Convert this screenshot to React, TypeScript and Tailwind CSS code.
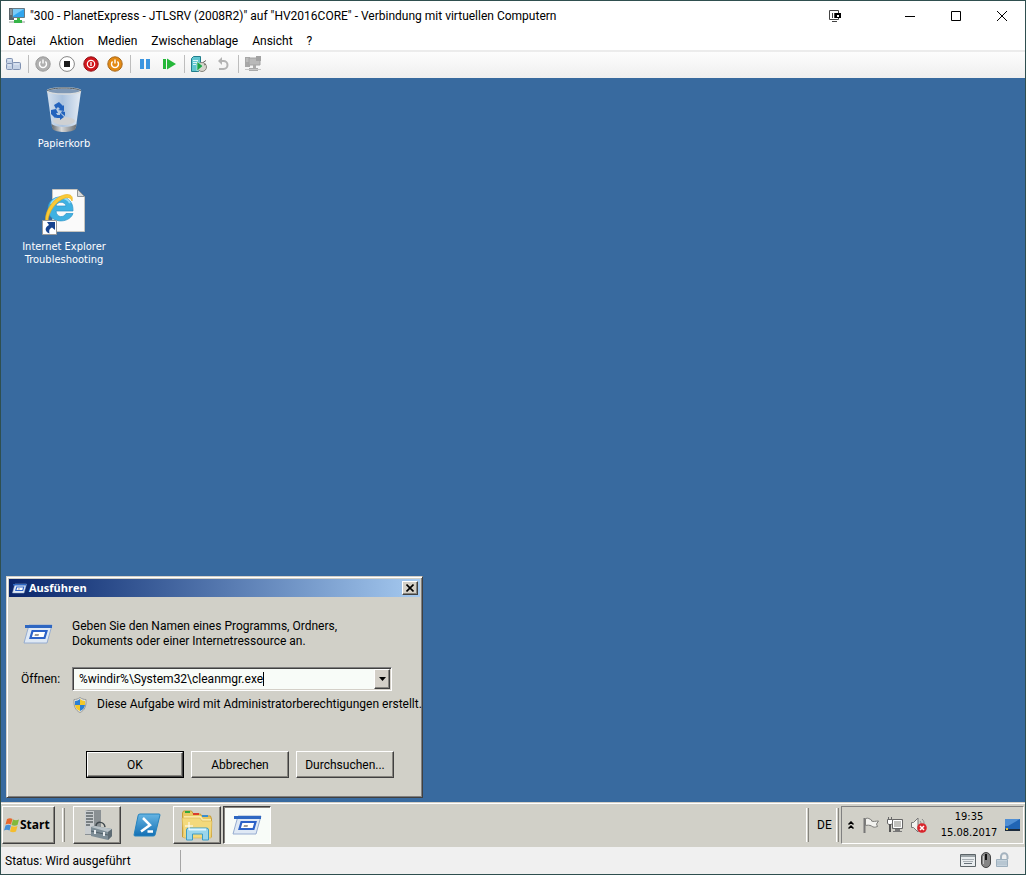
import { useState } from 'react';
import type { ReactNode } from 'react';

const raised =
  'border border-t-white border-l-white border-r-[#404040] border-b-[#404040] shadow-[inset_-1px_-1px_0_#87857f]';

const menus = ['Datei', 'Aktion', 'Medien', 'Zwischenablage', 'Ansicht', '?'];

function ComputerIcon() {
  return (
    <svg viewBox="0 0 16 16" className="size-4" aria-hidden="true">
      <path d="M0 0h5v12H0z" fill="#5b656b" />
      <path d="M1 2h3M1 4h3M1 6h3" stroke="#b8c4c9" />
      <path d="M3.5.5h12v9h-12z" fill="#31a5ee" stroke="#687983" />
      <path d="M4 1h11L4 8z" fill="#7accf8" />
      <path d="M8 10h3v3H8z" fill="#41bb4b" />
      <path d="M0 13h16v2H0z" fill="#c8ccca" />
      <path d="M5 12h8v3H5z" fill="#36b548" />
    </svg>
  );
}

function BlocksIcon() {
  return (
    <svg viewBox="0 0 16 16" className="size-4" aria-hidden="true">
      <g fill="#c6d3e6" stroke="#7f91b2">
        <rect x="1.5" y="2.5" width="6" height="5" rx="1" />
        <rect x="1.5" y="7.5" width="6" height="6" rx="1" />
        <rect x="7.5" y="6.5" width="8" height="7" rx="1" />
      </g>
      <path d="M3 4h3M3 9h3M9 8h5" stroke="#e9eff8" />
    </svg>
  );
}

function PowerIcon({ fill, ring }: { fill: string; ring: string }) {
  return (
    <svg viewBox="0 0 16 16" className="size-4" aria-hidden="true">
      <circle cx="8" cy="8" r="7.2" fill={fill} stroke={ring} />
      <path d="M5.6 5.5a3.5 3.5 0 1 0 4.8 0M8 3.5v4" fill="none" stroke="#fff" strokeWidth="1.4" />
    </svg>
  );
}

function StopIcon() {
  return (
    <svg viewBox="0 0 16 16" className="size-4" aria-hidden="true">
      <circle cx="8" cy="8" r="7.4" fill="#fff" stroke="#858585" />
      <path d="M5 5h6v6H5z" fill="#1c1c1c" />
    </svg>
  );
}

function ShutdownIcon() {
  return (
    <svg viewBox="0 0 16 16" className="size-4" aria-hidden="true">
      <circle cx="8" cy="8" r="7.2" fill="#d3151b" stroke="#8e1419" />
      <circle cx="8" cy="8" r="3.7" fill="none" stroke="#fff" strokeWidth="1.2" />
      <path d="M8 6v4" stroke="#fff" strokeWidth="1.3" />
    </svg>
  );
}

function PauseIcon() {
  return (
    <svg viewBox="0 0 16 16" className="size-4" aria-hidden="true">
      <path d="M3 3h4v10H3zM9 3h4v10H9z" fill="#3b95e0" />
    </svg>
  );
}

function ResumeIcon() {
  return (
    <svg viewBox="0 0 16 16" className="size-4" aria-hidden="true">
      <path d="M2 3h3v10H2zM6 2.5L15 8l-9 5.5z" fill="#25b83a" />
    </svg>
  );
}

function CheckpointIcon() {
  return (
    <svg viewBox="0 0 16 16" className="size-4" aria-hidden="true">
      <path d="M.5 2.5l2-2h7v13l-2 2h-7z" fill="#5fc5d0" stroke="#217e8c" />
      <path d="M2 4.5h5M2 6.5h5M2 8.500h3" stroke="#d9f5f8" />
      <circle cx="11" cy="11" r="4.5" fill="#d6d4cc" stroke="#85837c" />
      <path d="M6 5.5l6 4.500-6 5z" fill="#1ca545" stroke="#fff" strokeWidth=".5" />
      <path d="M12 6.500l3-2M13 9l2-1" stroke="#6e6c66" />
    </svg>
  );
}

function RevertIcon() {
  return (
    <svg viewBox="0 0 16 16" className="size-4" aria-hidden="true">
      <path d="M5 5h3.500a4 4 0 0 1 0 8H4" fill="none" stroke="#b3b3b3" strokeWidth="2" />
      <path d="M7 1v8L3 5z" fill="#b3b3b3" />
    </svg>
  );
}

function EnhancedIcon() {
  return (
    <svg viewBox="0 0 16 16" className="size-4" aria-hidden="true">
      <path d="M0 1h5v10H0z" fill="#a7a7a7" />
      <path d="M1 3h3M1 5h3" stroke="#d0d0d0" />
      <path d="M4 2h11v7H4z" fill="#b9b9b9" stroke="#a2a2a2" />
      <path d="M11 0h5v5h-5z" fill="#a2a2a2" />
      <path d="M8 9h3v3H8zM4 12h9v3H4z" fill="#aaa" />
      <path d="M0 13h16v1H0z" fill="#c6c6c6" />
    </svg>
  );
}

function RecycleBinIcon() {
  return (
    <svg viewBox="0 0 36 46" className="h-[46px] w-9" aria-hidden="true">
      <defs>
        <linearGradient id="bin">
          <stop offset="0" stopColor="#dfe9f4" />
          <stop offset=".45" stopColor="#b3c9e3" />
          <stop offset="1" stopColor="#f1f5fa" />
        </linearGradient>
        <linearGradient id="bin-base">
          <stop offset="0" stopColor="#62676a" />
          <stop offset=".4" stopColor="#d6d8d9" />
          <stop offset="1" stopColor="#6b6f72" />
        </linearGradient>
      </defs>
      <path d="M1 4l5 36c2 5 22 5 24 0l5-36z" fill="url(#bin)" opacity=".93" />
      <path d="M5.500 37c5 4 20 4 25 0l-1 5c-3 4-20 4-23 0z" fill="url(#bin-base)" />
      <ellipse cx="18" cy="34" rx="11" ry="4" fill="#cfd1d3" />
      <ellipse cx="18" cy="4" rx="16.5" ry="3" fill="#7d97b5" stroke="#d9dcdd" strokeWidth="1.500" />
      <path d="M1 4c3-4 31-4 34 0" fill="none" stroke="#50585d" />
      <g fill="#2363bd">
        <path d="M8 18l5-3 4 4 1-1v6l-6-1 2-1-2-2-2 2z" />
        <path d="M5 23l5-1 2 4h-2l2 3-3 2-4-4z" />
        <path d="M11 28h3v-2l4 4-4 3v-2h-4zM16 24l3 1v4l-4-3z" />
      </g>
    </svg>
  );
}

function ExplorerShortcutIcon() {
  return (
    <svg viewBox="0 0 44 46" className="h-[46px] w-11" aria-hidden="true">
      <path d="M10.500.5h25l7 7v35h-32z" fill="#fafafa" stroke="#c6c4bf" />
      <path d="M35.500.5v7h7z" fill="#d7dadc" stroke="#8f9496" />
      <path
        d="M31 22H14c.5 7 8 7 10 2.500h7c-4 11-25 10-25-4.500 0-16 26-17 25 2zM24 17c-1-5-9-5-10 0z"
        fill="#3fb1e2"
        fillRule="evenodd"
        stroke="#2b93c9"
        strokeWidth=".7"
      />
      <path d="M9 15c4-8 15-8 19-1" fill="none" stroke="#93dbf7" strokeWidth="2" />
      <path
        d="M4 34C1 23 13 6 25 5.500c5 0 6 3 5 6.500-1-3-3-4-7-3C14 12 6 23 6 33z"
        fill="#f9ca38"
        stroke="#e9ab13"
        strokeWidth=".6"
      />
      <path d="M.5 31.500h14v14H.5z" fill="#fff" stroke="#999" />
      <path d="M5 33h8v8l-3-2.500c-3 1.500-3 3-2.500 6-5-2-5-6-.500-8.500z" fill="#17438f" />
    </svg>
  );
}

function RunIcon({ className }: { className: string }) {
  return (
    <svg viewBox="0 0 30 20" className={className} aria-hidden="true">
      <path d="M6 1h23l-5 18H1z" fill="#dfe9f5" stroke="#96acd0" />
      <path d="M2 1h27v3H2z" fill="#2e67c2" />
      <path d="M9.500 7h14l-2 7H7.500z" fill="#fff" stroke="#2c62c8" strokeWidth="2.200" />
      <path d="M12 10h4l-.500 2h-4z" fill="#9a9a9a" />
    </svg>
  );
}

function ShieldIcon() {
  return (
    <svg viewBox="0 0 16 16" className="size-4 shrink-0" aria-hidden="true">
      <path
        d="M8 .5c2 1.500 4 2 6 2C14.500 9 12.500 13.500 8 15.500 3.500 13.500 1.500 9 2 2.500c2 0 4-.5 6-2z"
        fill="#e6e6e2"
        stroke="#989a98"
      />
      <path d="M8 2v6H3V4c2 0 3.500-.7 5-2zM8 8h5c-.500 3-2 5-5 6z" fill="#2b7fd4" />
      <path d="M8 2c1.500 1.300 3 2 5 2v4H8zM3 8h5v6c-3-1-4.500-3-5-6z" fill="#f3c829" />
    </svg>
  );
}

function WindowsLogo() {
  return (
    <svg viewBox="0 0 16 16" className="size-4 shrink-0" aria-hidden="true">
      <path d="M3 2c2-1 4-1 5.500 0L7 7.500c-2-1-3.500-1-5.500 0z" fill="#e8682c" />
      <path d="M9 2.500c2 1 4 1 6 0L13.500 8c-2 1-4 1-6 0z" fill="#82b93c" />
      <path d="M1.500 8.500c2-1 3.500-1 5.500 0L5.500 13.500c-2-1-3.500-1-5.500 0z" fill="#458fd6" />
      <path d="M7.500 9c2 1 4 1 6 0L12 14.500c-2 1-4 1-6 0z" fill="#f5bd2c" />
    </svg>
  );
}

function ServerManagerIcon() {
  return (
    <svg viewBox="0 0 32 32" className="size-8" aria-hidden="true">
      <path d="M4 2l3-1h13v22l-4 3H4z" fill="#8a9093" />
      <path d="M4 2h9v23H4z" fill="#c9cdcf" />
      <path d="M5 4h7M5 7h7M5 10h7M5 13h7M5 16h4" stroke="#5d666a" strokeWidth="1.300" />
      <path d="M15 17c0-5 8-5 9 1" fill="none" stroke="#3f484d" strokeWidth="1.500" />
      <path d="M10 18l4-1 17 3v7l-4 4-17-4z" fill="#7d8d96" />
      <path d="M10 18l4-1 17 3-4 3z" fill="#b9c3c8" />
      <path d="M27 23l4-3v7l-4 4z" fill="#5e6c74" />
      <path d="M10 22l17 4" stroke="#52616a" />
      <path d="M14 21v4M23 23v4" stroke="#e8ecee" strokeWidth="2" />
    </svg>
  );
}

function PowerShellIcon() {
  return (
    <svg viewBox="0 0 28 24" className="h-6 w-7" aria-hidden="true">
      <defs>
        <linearGradient id="ps" x2="0" y2="1">
          <stop stopColor="#67b5e3" />
          <stop offset="1" stopColor="#126fb4" />
        </linearGradient>
      </defs>
      <path d="M7 1h19q1 0 1 1l-5 20q0 1-2 1H2q-1 0-1-1L5 3q0-2 2-2z" fill="url(#ps)" stroke="#2683bd" />
      <path d="M10 5l7 7-9 6.500M14.500 18.500H20" fill="none" stroke="#fff" strokeWidth="2.500" />
    </svg>
  );
}

function FolderIcon() {
  return (
    <svg viewBox="0 0 32 32" className="size-8" aria-hidden="true">
      <path d="M1.500 4l1-2h8l2 3h7l1 2h9l1 3v18h-29z" fill="#e9c862" stroke="#c69d38" />
      <path d="M4 2h5v2H4z" fill="#34a83a" />
      <path d="M12 4h6v2h-6z" fill="#db3c2c" />
      <path d="M21 6h6v2h-6z" fill="#3a8ed0" />
      <path d="M3 7h17l2 3h8v18H2z" fill="#f9e9a6" />
      <path d="M1 9h18l2 3h10l-1 17H3z" fill="#f3d97c" stroke="#d6b253" strokeWidth=".6" />
      <path d="M5.500 31V21q0-2 2-2h18q2 0 2 2v10h-6v-6h-10v6z" fill="#9ad6ec" stroke="#3c9bc4" />
      <path d="M8 20.500h17" stroke="#dff6ff" strokeWidth="2" />
      <path d="M8 13v8M4 17h8" stroke="#fff" />
    </svg>
  );
}

function ToolbarButton({ label, children }: { label: string; children: ReactNode }) {
  return (
    <button type="button" aria-label={label} className="flex h-6 w-6 items-center justify-center">
      {children}
    </button>
  );
}

function ToolbarSeparator() {
  return (
    <div className="flex w-[6px] justify-center">
      <div className="h-[18px] w-px bg-[#bdbdbd]" />
    </div>
  );
}

function TitleBar() {
  return (
    <header className="flex h-[29px] items-center bg-white pl-2">
      <ComputerIcon />
      <h1 className="flex-1 pl-[5px] text-[12px] whitespace-nowrap">
        "300 - PlanetExpress - JTLSRV (2008R2)" auf "HV2016CORE" - Verbindung mit virtuellen Computern
      </h1>
      <button type="button" aria-label="Vollbild" className="mr-10 flex w-6 justify-center">
        <svg viewBox="0 0 12 12" className="size-3" aria-hidden="true">
          <path d="M.5.500h9v9h-9zM3 11.500h5M3.500 3v5M5.500 3v5" fill="none" stroke="#444" />
          <path d="M6 3h6v5H6z" fill="#000" />
          <path d="M8 5h2v2H8z" fill="#fff" />
        </svg>
      </button>
      <button type="button" aria-label="Minimieren" className="flex w-[46px] justify-center">
        <svg viewBox="0 0 10 10" className="size-[10px]" aria-hidden="true">
          <path d="M0 5.500h10" stroke="#000" />
        </svg>
      </button>
      <button type="button" aria-label="Maximieren" className="flex w-[45px] justify-center">
        <svg viewBox="0 0 10 10" className="size-[10px]" aria-hidden="true">
          <path d="M.5.500h9v9h-9z" fill="none" stroke="#000" />
        </svg>
      </button>
      <button type="button" aria-label="Schließen" className="flex w-[47px] justify-center">
        <svg viewBox="0 0 10 10" className="size-[10px]" aria-hidden="true">
          <path d="M0 0l10 10M10 0L0 10" stroke="#000" />
        </svg>
      </button>
    </header>
  );
}

function Toolbar() {
  return (
    <div className="flex h-[28px] items-center border-t-2 border-[#ececec] bg-linear-to-b from-[#fdfdfd] to-[#efefef] pb-[2px]">
      <ToolbarButton label="Strg+Alt+Entf">
        <BlocksIcon />
      </ToolbarButton>
      <ToolbarSeparator />
      <ToolbarButton label="Starten">
        <PowerIcon fill="#b0b0b0" ring="#999999" />
      </ToolbarButton>
      <ToolbarButton label="Ausschalten">
        <StopIcon />
      </ToolbarButton>
      <ToolbarButton label="Herunterfahren">
        <ShutdownIcon />
      </ToolbarButton>
      <ToolbarButton label="Speichern">
        <PowerIcon fill="#e38a14" ring="#a8681a" />
      </ToolbarButton>
      <ToolbarSeparator />
      <ToolbarButton label="Anhalten">
        <PauseIcon />
      </ToolbarButton>
      <ToolbarButton label="Zurücksetzen">
        <ResumeIcon />
      </ToolbarButton>
      <ToolbarSeparator />
      <ToolbarButton label="Prüfpunkt">
        <CheckpointIcon />
      </ToolbarButton>
      <ToolbarButton label="Wiederherstellen">
        <RevertIcon />
      </ToolbarButton>
      <ToolbarSeparator />
      <ToolbarButton label="Erweiterte Sitzung">
        <EnhancedIcon />
      </ToolbarButton>
    </div>
  );
}

function RunDialog() {
  const [command, setCommand] = useState('%windir%\\System32\\cleanmgr.exe');

  return (
    <section
      aria-label="Ausführen"
      className="absolute bottom-1 left-[5px] w-[417px] border border-t-[#d4d0c8] border-l-[#d4d0c8] border-r-[#404040] border-b-[#404040] bg-[#d1d0c8] p-[2px] shadow-[inset_1px_1px_0_#fff,inset_-1px_-1px_0_#808080]"
    >
      <div className="flex h-[18px] items-center bg-linear-to-r from-[#0a246a] to-[#a6caf0] pr-[2px] pl-[3px]">
        <RunIcon className="h-[11px] w-[15px]" />
        <h2 className="flex-1 pl-[2px] font-['Open_Sans','Noto_Sans',sans-serif] text-[11px] font-bold text-white">
          Ausführen
        </h2>
        <button
          type="button"
          aria-label="Schließen"
          className={`flex h-[14px] w-4 items-center justify-center bg-[#d4d0c8] ${raised}`}
        >
          <svg viewBox="0 0 8 8" className="size-2" aria-hidden="true">
            <path d="M.5.500l7 7M7.500.500l-7 7" stroke="#000" strokeWidth="1.600" />
          </svg>
        </button>
      </div>
      <form className="pt-[22px] pb-[17px] pl-3" onSubmit={e => e.preventDefault()}>
        <div className="flex items-center">
          <div className="w-[51px] pl-[2px]">
            <RunIcon className="h-5 w-[30px]" />
          </div>
          <p className="text-[12px] leading-[15px]">
            Geben Sie den Namen eines Programms, Ordners,
            <br />
            Dokuments oder einer Internetressource an.
          </p>
        </div>
        <div className="mt-[18px] flex items-center">
          <label htmlFor="command" className="w-[51px] text-[12px]">
            Öffnen:
          </label>
          <div className="flex h-6 w-80 items-center border border-t-[#808080] border-l-[#808080] border-r-white border-b-white bg-[#f8fcf8] p-px shadow-[inset_1px_1px_0_#404040,inset_-1px_-1px_0_#d4d0c8]">
            <input
              id="command"
              type="text"
              value={command}
              onChange={e => setCommand(e.target.value)}
              className="field-sizing-content pl-[5px] text-[12px] outline-none"
            />
            <span className="h-[14px] w-px bg-black" />
            <button
              type="button"
              aria-label="Verlauf"
              className={`ml-auto flex h-5 w-4 items-center justify-center bg-[#d4d0c8] ${raised}`}
            >
              <svg viewBox="0 0 7 4" className="h-1 w-[7px]" aria-hidden="true">
                <path d="M0 0h7L3.500 4z" fill="#000" />
              </svg>
            </button>
          </div>
        </div>
        <div className="mt-[5px] flex items-center gap-[9px] pl-[51px] text-[12px] leading-[17px] whitespace-nowrap">
          <ShieldIcon />
          Diese Aufgabe wird mit Administratorberechtigungen erstellt.
        </div>
        <div className="mt-[38px] flex gap-[7px] pl-[65px] text-[12px]">
          <button type="submit" className="flex h-[27px] w-[98px] border border-black">
            <span className={`flex h-full w-full items-center justify-center ${raised}`}>OK</span>
          </button>
          <button type="button" className={`h-[27px] w-[98px] ${raised}`}>
            Abbrechen
          </button>
          <button type="button" className={`h-[27px] w-[98px] ${raised}`}>
            Durchsuchen...
          </button>
        </div>
      </form>
    </section>
  );
}

function Desktop() {
  return (
    <main className="relative min-h-[480px] flex-1 bg-[#386a9f]">
      <div className="flex w-[126px] flex-col text-center font-['DejaVu_Sans_Condensed','DejaVu_Sans',sans-serif] text-[11px] leading-[13px] text-white">
        <button type="button" className="flex h-[111px] flex-col items-center gap-1 pt-[9px]">
          <RecycleBinIcon />
          Papierkorb
        </button>
        <button type="button" className="flex flex-col items-center gap-[5px]">
          <ExplorerShortcutIcon />
          <span className="w-[100px]">Internet Explorer Troubleshooting</span>
        </button>
      </div>
      <RunDialog />
    </main>
  );
}

function Grip() {
  return <div className="h-[34px] w-[3px] border-r border-l border-r-[#87857f] border-l-white" />;
}

function Taskbar() {
  return (
    <nav
      aria-label="Taskleiste"
      className="flex h-[45px] items-center border-t border-[#d4d0c8] bg-[#d1d0c8] px-px shadow-[inset_0_1px_0_#fff]"
    >
      <button
        type="button"
        className={`flex h-[38px] w-[53px] items-center pl-px font-['Open_Sans','Noto_Sans',sans-serif] text-[12px] font-bold ${raised}`}
      >
        <WindowsLogo />
        Start
      </button>
      <div className="ml-[7px]">
        <Grip />
      </div>
      <div className="ml-2 flex items-center gap-[2px]">
        <button
          type="button"
          aria-label="Server-Manager"
          className={`flex h-[38px] w-12 items-center justify-center ${raised}`}
        >
          <ServerManagerIcon />
        </button>
        <button type="button" aria-label="PowerShell" className="flex h-[38px] w-12 items-center justify-center">
          <PowerShellIcon />
        </button>
        <button
          type="button"
          aria-label="Explorer"
          className={`flex h-[38px] w-12 items-center justify-center ${raised}`}
        >
          <FolderIcon />
        </button>
        <button
          type="button"
          aria-label="Ausführen"
          className="flex h-[38px] w-12 items-center justify-center border border-t-[#404040] border-l-[#404040] border-r-white border-b-white bg-[#f8fcf8] shadow-[inset_1px_1px_0_#87857f]"
        >
          <RunIcon className="h-5 w-[30px]" />
        </button>
      </div>
      <div className="ml-auto flex items-center">
        <Grip />
        <span className="w-[27px] pl-2 text-[12px]">DE</span>
        <Grip />
        <div className="ml-[2px] flex h-[38px] w-[183px] items-center border border-t-[#808080] border-l-[#808080] border-r-white border-b-white pl-[6px]">
          <svg viewBox="0 0 6 8" className="h-2 w-[6px]" aria-hidden="true">
            <path
              d="M.5 3.500L3 1l2.500 2.500M.5 7.500L3 5l2.500 2.500"
              fill="none"
              stroke="#000"
              strokeWidth="1.500"
            />
          </svg>
          <div className="flex gap-2 pl-[9px]">
            <svg viewBox="0 0 16 16" className="size-4" aria-hidden="true">
              <path d="M1.500 1v15" stroke="#777" strokeWidth="2" />
              <path
                d="M2.500 1.500c3-1 4 .5 6 1.500v1c2 1 4 0 7 0l-2 3 1 2.500c-3 1-4 1-6-.500-2-1-4-1-6-.500z"
                fill="#f2f2ef"
                stroke="#7d7d7a"
              />
            </svg>
            <svg viewBox="0 0 16 16" className="size-4" aria-hidden="true">
              <path d="M5.500 2.500h10v9h-10z" fill="#c2c2be" stroke="#666" />
              <path d="M6.500 3.500h8v7h-8z" fill="none" stroke="#fff" />
              <path d="M8 12h5v2H8zM6 14h9v1H6z" fill="#777" />
              <path d="M1.500 0v3M4.500 0v3" stroke="#666" />
              <path d="M.5 2.500h5v4l-1.500 1H2L.5 6.500z" fill="#fff" stroke="#666" />
              <path d="M3 7v8" stroke="#555" strokeWidth="2" />
            </svg>
            <svg viewBox="0 0 16 16" className="size-4" aria-hidden="true">
              <path d="M.5 5.500h2L7 1v14l-4.500-4.500h-2z" fill="#f2f2ef" stroke="#777" />
              <path d="M9 4c1 1 1 2 1 3M11 2c2 2 2 3 2 5" fill="none" stroke="#888" />
              <circle cx="11" cy="11" r="4.800" fill="#d8252c" />
              <path d="M9 9l4 4M13 9l-4 4" stroke="#fff" strokeWidth="1.500" />
            </svg>
          </div>
          <time className="w-[78px] pl-[6px] text-center font-['DejaVu_Sans_Condensed','DejaVu_Sans',sans-serif] text-[11px] leading-4">
            19:35
            <br />
            15.08.2017
          </time>
          <svg viewBox="0 0 16 14" className="h-[14px] w-4 shrink-0" aria-hidden="true">
            <path d="M0 1h15v10H0z" fill="#2165b5" />
            <path d="M0 1h15L3 8H0z" fill="#508fd4" />
            <path d="M0 11h15v2H0z" fill="#1c2b3d" />
            <path d="M1 10h2v2H1z" fill="#e5c13c" />
          </svg>
        </div>
      </div>
    </nav>
  );
}

function StatusBar() {
  return (
    <footer className="flex h-[27px] items-center bg-[#f0f0f0] pr-4 pl-1">
      <p className="w-[175px] text-[12px]">Status: Wird ausgeführt</p>
      <div className="h-[22px] w-px bg-[#a5a5a5]" />
      <div className="ml-auto flex items-center gap-[5px] pb-px">
        <svg viewBox="0 0 16 13" className="h-[13px] w-4" aria-hidden="true">
          <path d="M.5.500h15v12H.5z" fill="#e9edef" stroke="#5c6468" />
          <path d="M1 2h14" stroke="#9ba3a7" strokeWidth="2" />
          <path d="M2.500 5.500h11M3.500 7.500h10" stroke="#667078" strokeDasharray="1 1" />
          <path d="M4 9.500h8" stroke="#667078" />
        </svg>
        <svg viewBox="0 0 10 16" className="h-4 w-[10px]" aria-hidden="true">
          <rect x=".5" y=".5" width="9" height="15" rx="4.5" fill="#858585" stroke="#444" />
          <path d="M5 2v6" stroke="#111" strokeWidth="2" />
          <path d="M2.500 4v8" stroke="#c7c7c7" />
        </svg>
        <svg viewBox="0 0 13 16" className="h-4 w-[13px]" aria-hidden="true">
          <path d="M5 8V4.500a3.200 3.200 0 0 1 6.500 0V7" fill="none" stroke="#a5b3bf" strokeWidth="2" />
          <path d="M.5 7.500h11v7H.5z" fill="#c6d3dd" stroke="#9dafbd" />
          <path d="M1 10h10M1 12h10" stroke="#a9bac7" />
        </svg>
      </div>
    </footer>
  );
}

export default function App() {
  return (
    <div className="flex min-h-screen flex-col border border-[#2f4f4f] bg-white font-[Roboto,'Noto_Sans',sans-serif] text-black">
      <TitleBar />
      <nav aria-label="Menü" className="flex h-5 items-center gap-[14px] bg-white pt-[2px] pl-[7px] text-[12px]">
        {menus.map(menu => (
          <button key={menu} type="button">
            {menu}
          </button>
        ))}
      </nav>
      <Toolbar />
      <Desktop />
      <Taskbar />
      <StatusBar />
    </div>
  );
}
